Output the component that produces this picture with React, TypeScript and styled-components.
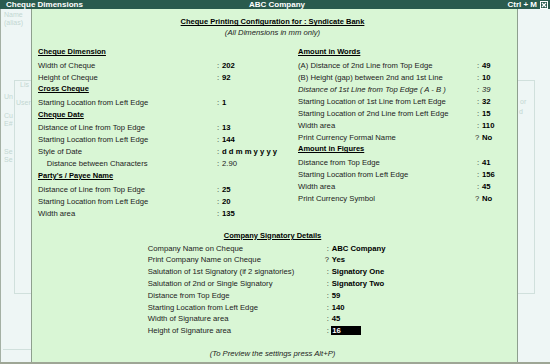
import React from "react";
import styled, { createGlobalStyle } from "styled-components";

const colors = {
  titleBar: "#2a5b4e",
  panel: "#d9f6d5",
  strip: "#eef6f5",
  ghost: "#c3d6d2",
  ghostLine: "#d0e0dc",
  border: "#8e9f8e",
  label: "#222222",
  value: "#000000",
  bottom: "#9ea695",
};

type Field = {
  label: string;
  mark?: ":" | "?";
  value?: string;
  heading?: boolean;
  italic?: boolean;
  indent?: boolean;
  plain?: boolean;
  editing?: boolean;
};

const leftFields: Field[] = [
  { label: "Cheque Dimension", heading: true },
  { label: "Width of Cheque", value: "202" },
  { label: "Height of Cheque", value: "92" },
  { label: "Cross Cheque", heading: true },
  { label: "Starting Location from Left Edge", value: "1" },
  { label: "Cheque Date", heading: true },
  { label: "Distance of Line from Top Edge", value: "13" },
  { label: "Starting Location from Left Edge", value: "144" },
  { label: "Style of Date", value: "d d m m y y y y" },
  { label: "Distance between Characters", value: "2.90", indent: true, plain: true },
  { label: "Party's / Payee Name", heading: true },
  { label: "Distance of Line from Top Edge", value: "25" },
  { label: "Starting Location from Left Edge", value: "20" },
  { label: "Width area", value: "135" },
];

const rightFields: Field[] = [
  { label: "Amount in Words", heading: true },
  { label: "(A) Distance of 2nd Line from Top Edge", value: "49" },
  { label: "(B) Height (gap) between 2nd and 1st Line", value: "10" },
  { label: "Distance of 1st Line from Top Edge ( A - B )", value: "39", italic: true, plain: true },
  { label: "Starting Location of 1st Line from Left Edge", value: "32" },
  { label: "Starting Location of 2nd Line from Left Edge", value: "15" },
  { label: "Width area", value: "110" },
  { label: "Print Currency Formal Name", mark: "?", value: "No" },
  { label: "Amount in Figures", heading: true },
  { label: "Distance from Top Edge", value: "41" },
  { label: "Starting Location from Left Edge", value: "156" },
  { label: "Width area", value: "45" },
  { label: "Print Currency Symbol", mark: "?", value: "No" },
];

const signatoryFields: Field[] = [
  { label: "Company Name on Cheque", value: "ABC Company" },
  { label: "Print Company Name on Cheque", mark: "?", value: "Yes" },
  { label: "Salutation of 1st Signatory (if 2 signatories)", value: "Signatory One" },
  { label: "Salutation of 2nd or Single Signatory", value: "Signatory Two" },
  { label: "Distance from Top Edge", value: "59" },
  { label: "Starting Location from Left Edge", value: "140" },
  { label: "Width of Signature area", value: "45" },
  { label: "Height of Signature area", value: "16", editing: true },
];

const GlobalStyle = createGlobalStyle`
  html, body {
    margin: 0;
    padding: 0;
    width: 550px;
    height: 364px;
    overflow: hidden;
    background: ${colors.strip};
  }

  body {
    font-family: "Liberation Sans", Arial, sans-serif;
  }
`;

const FieldList = ({ fields, rowHeight }: { fields: Field[]; rowHeight: number }) => (
  <>
    {fields.map((field, i) =>
      field.heading ? (
        <SectionHeading key={i}>{field.label}</SectionHeading>
      ) : (
        <FieldRow key={i} $height={rowHeight} $italic={field.italic}>
          <FieldLabel $indent={field.indent}>{field.label}</FieldLabel>
          <FieldMark $question={field.mark === "?"}>{field.mark ?? ":"}</FieldMark>
          {field.editing ? (
            <EditValue>{field.value}</EditValue>
          ) : (
            <FieldValue $plain={field.plain}>{field.value}</FieldValue>
          )}
        </FieldRow>
      )
    )}
  </>
);

const App = () => {
  return (
    <Screen>
      <GlobalStyle />
      <TitleBar>
        <span>Cheque Dimensions</span>
        <span>ABC Company</span>
        <TitleRight>
          <span>Ctrl + M</span>
          <CloseBox viewBox="0 0 8 8">
            <rect x="0.5" y="0.5" width="7" height="7" fill="none" stroke="#ffffff" />
            <path d="M2 2 L6 6 M6 2 L2 6" stroke="#ffffff" strokeWidth="1.2" />
          </CloseBox>
        </TitleRight>
      </TitleBar>

      <Body>
        <LeftStrip>
          <GhostText>Name</GhostText>
          <GhostText>(alias)</GhostText>
          <GhostGroup>
            <GhostSide>
              <GhostText $top={13}>Un</GhostText>
              <GhostText $top={11}>Cu</GhostText>
              <GhostText>E#</GhostText>
              <GhostText $top={20}>Se</GhostText>
              <GhostText>Se</GhostText>
            </GhostSide>
            <GhostBox>
              <GhostText $pad={5}>Lis</GhostText>
              <GhostText $top={10} $pad={1}>User</GhostText>
            </GhostBox>
          </GhostGroup>
          <GhostRule />
        </LeftStrip>

        <MainPanel>
          <PanelTitle>Cheque Printing Configuration for : Syndicate Bank</PanelTitle>
          <PanelNote>(All Dimensions in mm only)</PanelNote>

          <Columns>
            <Column>
              <FieldList fields={leftFields} rowHeight={12} />
            </Column>
            <Column>
              <FieldList fields={rightFields} rowHeight={12} />
            </Column>
          </Columns>

          <SignatoryHeading>Company Signatory Details</SignatoryHeading>
          <SignatoryBlock>
            <FieldList fields={signatoryFields} rowHeight={11.8} />
          </SignatoryBlock>

          <PanelFooter>(To Preview the settings press Alt+P)</PanelFooter>
        </MainPanel>

        <RightStrip>
          <GhostBoxRight>
            <GhostText $top={17} $pad={2}>or</GhostText>
            <GhostText $top={2} $pad={1}>d</GhostText>
          </GhostBoxRight>
        </RightStrip>
      </Body>

      <BottomBar />
    </Screen>
  );
};

const Screen = styled.div`
  width: 550px;
  height: 364px;
  display: flex;
  flex-direction: column;
  overflow: hidden;
`;

const TitleBar = styled.div`
  display: grid;
  grid-template-columns: 1fr auto 1fr;
  align-items: center;

  height: 9px;
  padding: 0 2px 0 6px;

  background-color: ${colors.titleBar};
  color: #ffffff;

  font-size: 8px;
  font-weight: bold;
  line-height: 9px;
  white-space: nowrap;
`;

const TitleRight = styled.div`
  justify-self: end;
  display: flex;
  align-items: center;
  gap: 3px;
`;

const CloseBox = styled.svg`
  width: 8px;
  height: 8px;
`;

const Body = styled.div`
  display: flex;
  height: 353px;
`;

const LeftStrip = styled.div`
  box-sizing: border-box;
  width: 31px;
  padding-top: 1.5px;

  border-left: 1px solid #a4b0a4;
  background-color: ${colors.strip};

  display: flex;
  flex-direction: column;
  overflow: hidden;
`;

const GhostText = styled.div<{ $top?: number; $pad?: number }>`
  margin-top: ${({ $top }) => $top ?? 0}px;
  padding-left: ${({ $pad }) => $pad ?? 3}px;

  color: ${colors.ghost};
  font-size: 7px;
  line-height: 8px;
  white-space: nowrap;
`;

const GhostGroup = styled.div`
  display: flex;
  margin-top: 53.5px;
`;

const GhostSide = styled.div`
  width: 13px;
  display: flex;
  flex-direction: column;
`;

const GhostBox = styled.div`
  flex: 1;
  height: 212px;
  border: 1px solid ${colors.ghostLine};
  border-right: none;
  overflow: hidden;
`;

const GhostRule = styled.div`
  margin: 55px 0 0 2px;
  border-top: 1px solid ${colors.ghostLine};
`;

const MainPanel = styled.div`
  box-sizing: border-box;
  width: 487px;
  padding: 7.2px 10px 0 6px;

  border-left: 1px solid ${colors.border};
  border-right: 1px solid ${colors.border};
  background-color: ${colors.panel};
  color: ${colors.label};

  display: flex;
  flex-direction: column;

  font-size: 7.7px;
  white-space: nowrap;
`;

const PanelTitle = styled.div`
  text-align: center;
  line-height: 11px;
  font-size: 7.5px;
  font-weight: bold;
  color: ${colors.value};
  text-decoration: underline;
  text-underline-offset: 1px;
`;

const PanelNote = styled.div`
  text-align: center;
  line-height: 11px;
  font-style: italic;
`;

const Columns = styled.div`
  display: grid;
  grid-template-columns: 260px 1fr;
  margin-top: 8.1px;
`;

const Column = styled.div`
  display: flex;
  flex-direction: column;
`;

const SectionHeading = styled.div`
  height: 12px;
  margin-bottom: 1.2px;

  line-height: 12px;
  font-size: 7.5px;
  font-weight: bold;
  color: ${colors.value};
  text-decoration: underline;
  text-underline-offset: 1px;
`;

const FieldRow = styled.div<{ $height: number; $italic?: boolean }>`
  display: flex;
  align-items: center;
  height: ${({ $height }) => $height}px;
  font-style: ${({ $italic }) => ($italic ? "italic" : "normal")};
`;

const FieldLabel = styled.span<{ $indent?: boolean }>`
  box-sizing: border-box;
  width: 179px;
  padding-left: ${({ $indent }) => ($indent ? 8.7 : 0)}px;
  flex-shrink: 0;
`;

const FieldMark = styled.span<{ $question?: boolean }>`
  width: ${({ $question }) => ($question ? 7 : 5)}px;
  margin-left: ${({ $question }) => ($question ? -2 : 0)}px;
  flex-shrink: 0;
`;

const FieldValue = styled.span<{ $plain?: boolean }>`
  font-weight: ${({ $plain }) => ($plain ? "normal" : "bold")};
  color: ${({ $plain }) => ($plain ? colors.label : colors.value)};
`;

const EditValue = styled.span`
  box-sizing: border-box;
  width: 30.6px;
  height: 9px;
  margin-left: -1px;
  padding-left: 1.5px;

  background-color: #000000;
  color: #ffffff;

  line-height: 9px;
  font-weight: bold;
`;

const SignatoryHeading = styled(SectionHeading)`
  margin-top: 10.6px;
  margin-bottom: 0.6px;
  text-align: center;
`;

const SignatoryBlock = styled.div`
  display: flex;
  flex-direction: column;
  margin-left: 109.7px;
`;

const PanelFooter = styled.div`
  margin-top: 11.2px;
  text-align: center;
  line-height: 12px;
  font-style: italic;
`;

const RightStrip = styled.div`
  flex: 1;
  background-color: ${colors.strip};
  overflow: hidden;
`;

const GhostBoxRight = styled.div`
  width: 16px;
  height: 212px;
  margin-top: 71px;

  border: 1px solid ${colors.ghostLine};
  border-left: none;
`;

const BottomBar = styled.div`
  height: 2px;
  background-color: ${colors.bottom};
`;

export default App;
